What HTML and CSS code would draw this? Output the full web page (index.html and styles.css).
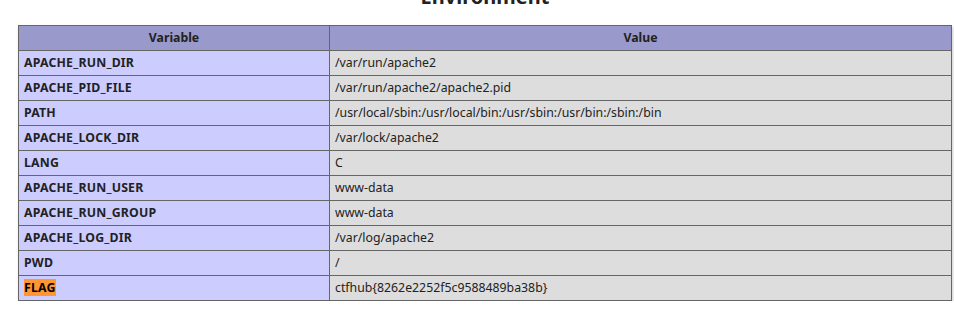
FILE: index.html
```html
<!DOCTYPE html>
<html>
<head>
<meta charset="utf-8">
<link rel="stylesheet" href="styles.css">
</head>
<body>
<div class="center">
<h2 class="title">Environment</h2>
<table class="env">
<tr class="h"><th>Variable</th><th>Value</th></tr>
<tr><td class="e">APACHE_RUN_DIR </td><td class="v">/var/run/apache2 </td></tr>
<tr><td class="e">APACHE_PID_FILE </td><td class="v">/var/run/apache2/apache2.pid </td></tr>
<tr><td class="e">PATH </td><td class="v">/usr/local/sbin:/usr/local/bin:/usr/sbin:/usr/bin:/sbin:/bin </td></tr>
<tr><td class="e">APACHE_LOCK_DIR </td><td class="v">/var/lock/apache2 </td></tr>
<tr><td class="e">LANG </td><td class="v">C </td></tr>
<tr><td class="e">APACHE_RUN_USER </td><td class="v">www-data </td></tr>
<tr><td class="e">APACHE_RUN_GROUP </td><td class="v">www-data </td></tr>
<tr><td class="e">APACHE_LOG_DIR </td><td class="v">/var/log/apache2 </td></tr>
<tr><td class="e">PWD </td><td class="v">/ </td></tr>
<tr><td class="e"><mark class="hit">FLAG</mark> </td><td class="v">ctfhub{8262e2252f5c9588489ba38b} </td></tr>
</table>
</div>
</body>
</html>
```

FILE: styles.css
```css
html, body {
  margin: 0;
  padding: 0;
  background: #fff;
  overflow: hidden;
}
body {
  color: #222;
  font-family: "Noto Sans", "Open Sans", sans-serif;
}
.center {
  width: 954px;
}
.title {
  margin: -15px 0 16px 18px;
  width: 934px;
  text-align: center;
  font-size: 20px;
  line-height: 24px;
  font-weight: bold;
}
.env {
  margin-left: 18px;
  width: 934px;
  border-collapse: collapse;
  box-shadow: 1px 2px 3px #ccc;
}
.env th, .env td {
  border: 1px solid #666;
  font-size: 12.3px;
  line-height: 16px;
  padding: 4px 5px;
  vertical-align: baseline;
}
.h {
  background-color: #99c;
  font-weight: bold;
}
.h th {
  text-align: center;
}
.e {
  background-color: #ccf;
  width: 300px;
  font-weight: bold;
  text-align: left;
}
.e.wide, .e {
  letter-spacing: 0.2px;
}
.v {
  background-color: #ddd;
  text-align: left;
  overflow-x: auto;
  word-wrap: break-word;
}
.hit {
  background-color: #ff9632;
  color: #000;
}
```
